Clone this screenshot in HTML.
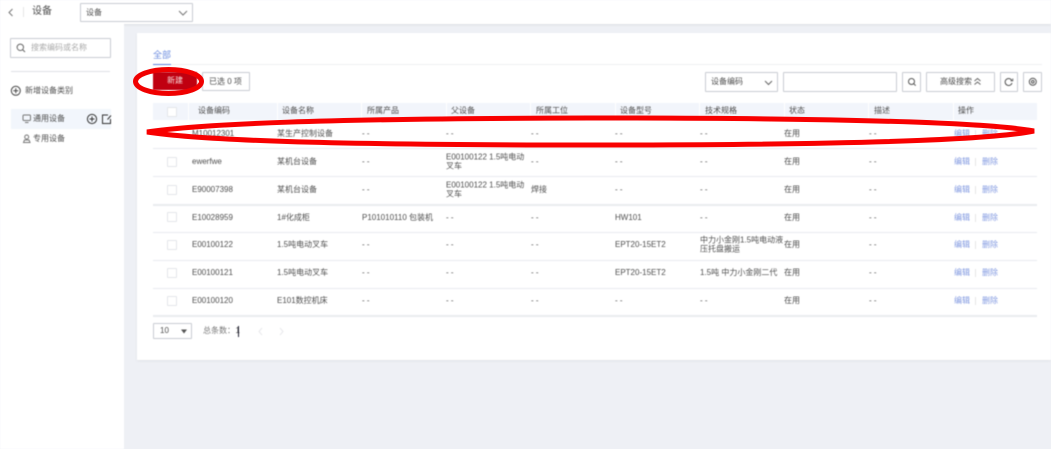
<!DOCTYPE html>
<html lang="zh">
<head>
<meta charset="utf-8">
<title>设备</title>
<style>
html,body{margin:0;padding:0;width:1051px;height:449px;overflow:hidden;background:#eef0f5}
body{font-family:"Liberation Sans","Noto Sans CJK SC",sans-serif;font-size:8px;color:#4f4f4f}
#w{position:absolute;left:0;top:0;width:1051px;height:449px;overflow:hidden;filter:blur(.4px)}
.a{position:absolute;box-sizing:border-box}
.t{position:absolute;white-space:nowrap;line-height:10px;transform:translateY(-50%);margin-top:.8px}
.m{position:absolute;line-height:8.5px;transform:translateY(-50%);margin-top:.8px}
.b{position:absolute;box-sizing:border-box;background:#fff;border:1px solid #c9ccd2;border-radius:1px}
.h{position:absolute;white-space:nowrap;line-height:10px;transform:translateY(-50%);margin-top:.8px;color:#4f4f4f}
.hs{position:absolute;top:103px;width:1px;height:17px;background:#fff}
.l{position:absolute;left:153px;width:884px;height:1px;background:#e9ebef}
.c{position:absolute;left:167px;width:10px;height:10px;box-sizing:border-box;background:#fff;border:1px solid #e4e6ea;border-radius:1px}
.e{color:#8098e0}
svg{position:absolute;overflow:visible}
</style>
</head>
<body>
<div id="w">
  <!-- top bar -->
  <div class="a" style="left:0;top:0;width:1051px;height:24px;background:#fff;box-shadow:0 1px 2px #dcdee3"></div>
  <svg style="left:0;top:0" width="30" height="24"><path d="M12.5 9 L9 12.5 L12.5 16" fill="none" stroke="#777" stroke-width="1"/><path d="M23.5 7V17" stroke="#e6e6e6" stroke-width="1"/></svg>
  <div class="t" style="left:32px;top:11.5px;font-size:10px;line-height:12px">设备</div>
  <div class="b" style="left:80px;top:3px;width:113px;height:19px"></div>
  <div class="t" style="left:86px;top:12px">设备</div>
  <svg style="left:178px;top:10px" width="10" height="6"><path d="M1 1 L5 5 L9 1" fill="none" stroke="#777" stroke-width="1"/></svg>

  <!-- sidebar -->
  <div class="a" style="left:0;top:24px;width:124px;height:425px;background:#fff"></div>
  <div class="b" style="left:10px;top:38px;width:101px;height:20px"></div>
  <svg style="left:16px;top:43px" width="10" height="10"><circle cx="4.3" cy="4.3" r="3.2" fill="none" stroke="#666" stroke-width="1"/><path d="M6.6 6.6 L9 9" stroke="#666" stroke-width="1"/></svg>
  <div class="t" style="left:31px;top:47.500px;color:#aaa">搜索编码或名称</div>
  <div class="a" style="left:11px;top:71px;width:99px;height:1px;background:#dfe1e5"></div>
  <svg style="left:10px;top:85px" width="12" height="12"><circle cx="5.8" cy="5.800" r="4.500" fill="none" stroke="#444" stroke-width="1"/><path d="M3.3 5.800H8.300M5.800 3.300V8.300" stroke="#444" stroke-width="1"/></svg>
  <div class="t" style="left:25px;top:90.500px">新增设备类别</div>
  <div class="a" style="left:11px;top:109px;width:100px;height:20px;background:#f2f6fc"></div>
  <svg style="left:22px;top:114px" width="10" height="10"><rect x="1" y="1" width="7.500" height="5.500" rx="1" fill="none" stroke="#777" stroke-width="1"/><path d="M3 8.500H6.500" stroke="#777" stroke-width="1"/></svg>
  <div class="t" style="left:33px;top:118.500px">通用设备</div>
  <svg style="left:86px;top:113px" width="26" height="13"><circle cx="6" cy="6" r="4.600" fill="none" stroke="#333" stroke-width="1"/><path d="M3.500 6H8.500M6 3.500V8.500" stroke="#333" stroke-width="1"/><path d="M22 2 H16.500 V10.500 H24.500 V6 M21.500 6.500 L25 2.500" fill="none" stroke="#333" stroke-width="1"/></svg>
  <svg style="left:22px;top:134px" width="10" height="10"><circle cx="4.700" cy="3" r="2" fill="none" stroke="#777" stroke-width="1"/><path d="M1.500 8.500 L2.500 6 H7 L8 8.500Z" fill="none" stroke="#777" stroke-width="1"/></svg>
  <div class="t" style="left:33px;top:138.500px">专用设备</div>

  <!-- card -->
  <div class="a" style="left:137px;top:33px;width:914px;height:327px;background:#fff;box-shadow:0 1px 2px #e0e2e7"></div>
  <div class="t" style="left:153px;top:54px;font-size:9px;color:#6f8fe0">全部</div>
  <div class="a" style="left:153px;top:64px;width:889px;height:1px;background:#eeeff2"></div>
  <div class="a" style="left:153px;top:63.500px;width:18px;height:1.500px;background:#5f82dd"></div>

  <!-- toolbar -->
  <div class="a" style="left:153px;top:72px;width:44px;height:18px;background:#c00010"></div>
  <div class="t" style="left:167px;top:80.500px;color:#f6dcdc">新建</div>
  <div class="b" style="left:202px;top:72px;width:48px;height:19px"></div>
  <div class="t" style="left:209px;top:81px">已选 0 项</div>
  <div class="b" style="left:705px;top:72px;width:73px;height:20px"></div>
  <div class="t" style="left:711px;top:81.500px">设备编码</div>
  <svg style="left:764px;top:80px" width="9" height="6"><path d="M1 1 L4.500 4.500 L8 1" fill="none" stroke="#666" stroke-width="1"/></svg>
  <div class="b" style="left:783px;top:72px;width:114px;height:20px"></div>
  <div class="b" style="left:902px;top:72px;width:19px;height:20px"></div>
  <svg style="left:907px;top:77px" width="10" height="10"><circle cx="4.500" cy="4.500" r="3" fill="none" stroke="#555" stroke-width="1"/><path d="M6.700 6.700 L8.700 8.700" stroke="#555" stroke-width="1"/></svg>
  <div class="b" style="left:926px;top:72px;width:69px;height:20px"></div>
  <div class="t" style="left:940px;top:81px">高级搜索</div>
  <svg style="left:973px;top:77px" width="9" height="9"><path d="M1.500 4 L4.500 1.500 L7.500 4 M1.500 7.500 L4.500 5 L7.500 7.500" fill="none" stroke="#666" stroke-width="1"/></svg>
  <div class="b" style="left:1000px;top:72px;width:18px;height:20px"></div>
  <svg style="left:1004px;top:77px" width="10" height="10"><path d="M7.800 3.500 A3.500 3.500 0 1 0 8 6" fill="none" stroke="#555" stroke-width="1"/><path d="M6.500 3.800 L8.800 3.800 L8.800 1.500" fill="none" stroke="#555" stroke-width=".8"/></svg>
  <div class="b" style="left:1023px;top:72px;width:19px;height:20px"></div>
  <svg style="left:1028px;top:77px" width="10" height="10"><circle cx="4.800" cy="4.800" r="3.500" fill="none" stroke="#555" stroke-width="1"/><circle cx="4.800" cy="4.800" r="1.300" fill="none" stroke="#555" stroke-width="1"/></svg>

  <!-- table header -->
  <div class="a" style="left:153px;top:103px;width:884px;height:17px;background:#f2f5fb"></div>
  <div class="c" style="top:107px"></div>
  <div class="hs" style="left:188px"></div><div class="hs" style="left:277px"></div><div class="hs" style="left:361px"></div><div class="hs" style="left:446px"></div><div class="hs" style="left:530px"></div><div class="hs" style="left:615px"></div><div class="hs" style="left:699px"></div><div class="hs" style="left:784px"></div><div class="hs" style="left:868px"></div><div class="hs" style="left:953px"></div>
  <div class="h" style="left:198px;top:110.500px">设备编码</div>
  <div class="h" style="left:282px;top:110.500px">设备名称</div>
  <div class="h" style="left:367px;top:110.500px">所属产品</div>
  <div class="h" style="left:451px;top:110.500px">父设备</div>
  <div class="h" style="left:536px;top:110.500px">所属工位</div>
  <div class="h" style="left:620px;top:110.500px">设备型号</div>
  <div class="h" style="left:705px;top:110.500px">技术规格</div>
  <div class="h" style="left:789px;top:110.500px">状态</div>
  <div class="h" style="left:874px;top:110.500px">描述</div>
  <div class="h" style="left:958px;top:110.500px">操作</div>

  <!-- lines -->
  <div class="l" style="top:148px"></div><div class="l" style="top:176px"></div><div class="l" style="top:204px;height:1.500px"></div><div class="l" style="top:232px"></div><div class="l" style="top:259.500px"></div><div class="l" style="top:287.500px"></div><div class="l" style="top:315px;height:1.500px"></div>

  <!-- row 1 -->
  <div class="t" style="left:192px;top:133.500px">M10012301</div>
  <div class="t" style="left:277px;top:133.500px">某生产控制设备</div>
  <div class="t" style="left:362px;top:133.500px">- -</div><div class="t" style="left:446px;top:133.500px">- -</div><div class="t" style="left:531px;top:133.500px">- -</div><div class="t" style="left:615px;top:133.500px">- -</div><div class="t" style="left:700px;top:133.500px">- -</div>
  <div class="t" style="left:784px;top:133.500px">在用</div><div class="t" style="left:869px;top:133.500px">- -</div>
  <div class="t e" style="left:954px;top:133.500px">编辑</div><div class="a" style="left:975px;top:130px;width:1px;height:8px;background:#e6e6e6"></div><div class="t e" style="left:982px;top:133.500px">删除</div>

  <!-- row 2 -->
  <div class="c" style="top:157px"></div>
  <div class="t" style="left:192px;top:161.500px">ewerfwe</div>
  <div class="t" style="left:277px;top:161.500px">某机台设备</div>
  <div class="t" style="left:362px;top:161.500px">- -</div>
  <div class="m" style="left:446px;top:161.500px;width:84px">E00100122 1.5吨电动叉车</div>
  <div class="t" style="left:531px;top:161.500px">- -</div><div class="t" style="left:615px;top:161.500px">- -</div><div class="t" style="left:700px;top:161.500px">- -</div>
  <div class="t" style="left:784px;top:161.500px">在用</div><div class="t" style="left:869px;top:161.500px">- -</div>
  <div class="t e" style="left:954px;top:161.500px">编辑</div><div class="a" style="left:975px;top:158px;width:1px;height:8px;background:#e6e6e6"></div><div class="t e" style="left:982px;top:161.500px">删除</div>

  <!-- row 3 -->
  <div class="c" style="top:185px"></div>
  <div class="t" style="left:192px;top:189.500px">E90007398</div>
  <div class="t" style="left:277px;top:189.500px">某机台设备</div>
  <div class="t" style="left:362px;top:189.500px">- -</div>
  <div class="m" style="left:446px;top:189.500px;width:84px">E00100122 1.5吨电动叉车</div>
  <div class="t" style="left:531px;top:189.500px">焊接</div><div class="t" style="left:615px;top:189.500px">- -</div><div class="t" style="left:700px;top:189.500px">- -</div>
  <div class="t" style="left:784px;top:189.500px">在用</div><div class="t" style="left:869px;top:189.500px">- -</div>
  <div class="t e" style="left:954px;top:189.500px">编辑</div><div class="a" style="left:975px;top:186px;width:1px;height:8px;background:#e6e6e6"></div><div class="t e" style="left:982px;top:189.500px">删除</div>

  <!-- row 4 -->
  <div class="c" style="top:212px"></div>
  <div class="t" style="left:192px;top:217px">E10028959</div>
  <div class="t" style="left:277px;top:217px">1#化成柜</div>
  <div class="t" style="left:362px;top:217px">P101010110 包装机</div>
  <div class="t" style="left:446px;top:217px">- -</div><div class="t" style="left:531px;top:217px">- -</div>
  <div class="t" style="left:615px;top:217px">HW101</div><div class="t" style="left:700px;top:217px">- -</div>
  <div class="t" style="left:784px;top:217px">在用</div><div class="t" style="left:869px;top:217px">- -</div>
  <div class="t e" style="left:954px;top:217px">编辑</div><div class="a" style="left:975px;top:214px;width:1px;height:8px;background:#e6e6e6"></div><div class="t e" style="left:982px;top:217px">删除</div>

  <!-- row 5 -->
  <div class="c" style="top:240px"></div>
  <div class="t" style="left:192px;top:244.500px">E00100122</div>
  <div class="t" style="left:277px;top:244.500px">1.5吨电动叉车</div>
  <div class="t" style="left:362px;top:244.500px">- -</div><div class="t" style="left:446px;top:244.500px">- -</div><div class="t" style="left:531px;top:244.500px">- -</div>
  <div class="t" style="left:615px;top:244.500px">EPT20-15ET2</div>
  <div class="m" style="left:700px;top:244.500px;width:84px">中力小金刚1.5吨电动液压托盘搬运</div>
  <div class="t" style="left:784px;top:244.500px">在用</div><div class="t" style="left:869px;top:244.500px">- -</div>
  <div class="t e" style="left:954px;top:244.500px">编辑</div><div class="a" style="left:975px;top:241px;width:1px;height:8px;background:#e6e6e6"></div><div class="t e" style="left:982px;top:244.500px">删除</div>

  <!-- row 6 -->
  <div class="c" style="top:268px"></div>
  <div class="t" style="left:192px;top:272.500px">E00100121</div>
  <div class="t" style="left:277px;top:272.500px">1.5吨电动叉车</div>
  <div class="t" style="left:362px;top:272.500px">- -</div><div class="t" style="left:446px;top:272.500px">- -</div><div class="t" style="left:531px;top:272.500px">- -</div>
  <div class="t" style="left:615px;top:272.500px">EPT20-15ET2</div>
  <div class="t" style="left:700px;top:272.500px">1.5吨 中力小金刚二代</div>
  <div class="t" style="left:784px;top:272.500px">在用</div><div class="t" style="left:869px;top:272.500px">- -</div>
  <div class="t e" style="left:954px;top:272.500px">编辑</div><div class="a" style="left:975px;top:269px;width:1px;height:8px;background:#e6e6e6"></div><div class="t e" style="left:982px;top:272.500px">删除</div>

  <!-- row 7 -->
  <div class="c" style="top:296px"></div>
  <div class="t" style="left:192px;top:300.500px">E00100120</div>
  <div class="t" style="left:277px;top:300.500px">E101数控机床</div>
  <div class="t" style="left:362px;top:300.500px">- -</div><div class="t" style="left:446px;top:300.500px">- -</div><div class="t" style="left:531px;top:300.500px">- -</div><div class="t" style="left:615px;top:300.500px">- -</div><div class="t" style="left:700px;top:300.500px">- -</div>
  <div class="t" style="left:784px;top:300.500px">在用</div><div class="t" style="left:869px;top:300.500px">- -</div>
  <div class="t e" style="left:954px;top:300.500px">编辑</div><div class="a" style="left:975px;top:297px;width:1px;height:8px;background:#e6e6e6"></div><div class="t e" style="left:982px;top:300.500px">删除</div>

  <!-- pagination -->
  <div class="b" style="left:153px;top:323px;width:39px;height:16px"></div>
  <div class="t" style="left:160px;top:330.500px">10</div>
  <svg style="left:180px;top:329px" width="8" height="5"><path d="M1 .5H7L4 4.500Z" fill="#555"/></svg>
  <div class="t" style="left:203px;top:330.500px;color:#777">总条数：</div>
  <div class="t" style="left:235.500px;top:330.500px">1</div>
  <div class="a" style="left:237.500px;top:326px;width:1px;height:11px;background:#223"></div>
  <svg style="left:256px;top:326px" width="30" height="11"><path d="M6 2 L3 5.500 L6 9" fill="none" stroke="#e8e9ec" stroke-width="1"/><path d="M24 2 L27 5.500 L24 9" fill="none" stroke="#e8e9ec" stroke-width="1"/></svg>
</div>

<!-- red annotations -->
<svg style="left:0;top:0" width="1051" height="449">
  <ellipse cx="168.500" cy="81.500" rx="33" ry="12" fill="none" stroke="#f00000" stroke-width="5"/>
  <path d="M147 132 C 200 124 320 118.500 590 118 C 850 118 990 123 1034 131 C 990 140 850 145 590 145 C 320 145 200 140 147 132 Z" fill="none" stroke="#f80000" stroke-width="5"/>
</svg>
</body>
</html>
